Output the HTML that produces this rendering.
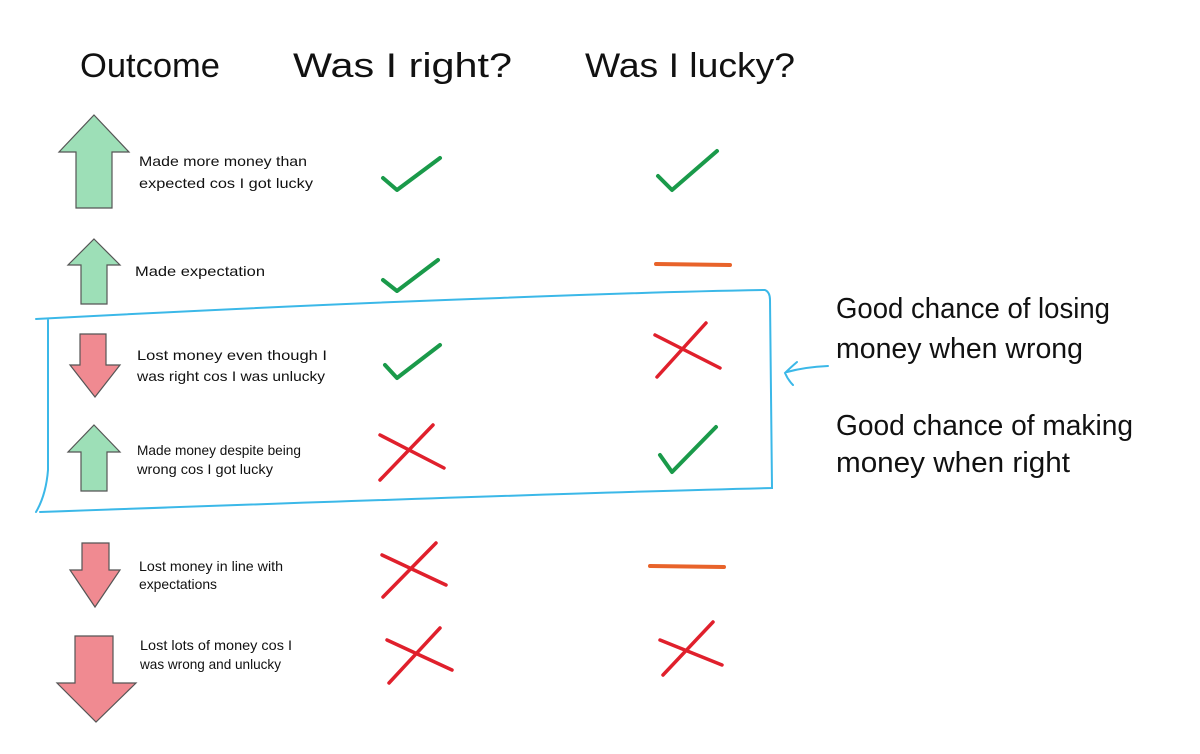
<!DOCTYPE html>
<html><head><meta charset="utf-8"><style>
body{margin:0;background:#fff;width:1200px;height:754px;overflow:hidden}
svg{display:block}
text{font-family:"Liberation Sans Narrow","Liberation Sans",sans-serif;fill:#111}
.s{font-size:14px}
.h{font-size:34px}
.r{font-size:29px}
</style></head><body>
<svg width="1200" height="754" viewBox="0 0 1200 754">
<text class="h" x="80" y="77" textLength="140" lengthAdjust="spacingAndGlyphs">Outcome</text>
<text class="h" x="293" y="77" textLength="219" lengthAdjust="spacingAndGlyphs">Was I right?</text>
<text class="h" x="585" y="77" textLength="210" lengthAdjust="spacingAndGlyphs">Was I lucky?</text>

<g stroke="#555" stroke-width="1.2">
<polygon fill="#9ddfb7" points="94,115 129,152 112,152 112,208 76,208 76,152 59,152"/>
<polygon fill="#9ddfb7" points="94,239 120,265 107,265 107,304 81,304 81,265 68,265"/>
<polygon fill="#f08a91" points="80,334 106,334 106,365 120,365 95,397 70,365 80,365"/>
<polygon fill="#9ddfb7" points="94,425 120,452 107,452 107,491 81,491 81,452 68,452"/>
<polygon fill="#f08a91" points="82,543 109,543 109,570 120,570 95,607 70,570 82,570"/>
<polygon fill="#f08a91" points="75,636 113,636 113,683 136,683 96,722 57,683 75,683"/>
</g>

<g lengthAdjust="spacingAndGlyphs">
<text class="s" x="139" y="166" textLength="168" lengthAdjust="spacingAndGlyphs">Made more money than</text>
<text class="s" x="139" y="188" textLength="174" lengthAdjust="spacingAndGlyphs">expected cos I got lucky</text>
<text class="s" x="135" y="276" textLength="130" lengthAdjust="spacingAndGlyphs">Made expectation</text>
<text class="s" x="137" y="360" textLength="190" lengthAdjust="spacingAndGlyphs">Lost money even though I</text>
<text class="s" x="137" y="381" textLength="188" lengthAdjust="spacingAndGlyphs">was right cos I was unlucky</text>
<text class="s" x="137" y="455" textLength="164" lengthAdjust="spacingAndGlyphs">Made money despite being</text>
<text class="s" x="137" y="474" textLength="136" lengthAdjust="spacingAndGlyphs">wrong cos I got lucky</text>
<text class="s" x="139" y="571" textLength="144" lengthAdjust="spacingAndGlyphs">Lost money in line with</text>
<text class="s" x="139" y="589" textLength="78" lengthAdjust="spacingAndGlyphs">expectations</text>
<text class="s" x="140" y="650" textLength="152" lengthAdjust="spacingAndGlyphs">Lost lots of money cos I</text>
<text class="s" x="140" y="669" textLength="141" lengthAdjust="spacingAndGlyphs">was wrong and unlucky</text>
</g>

<g fill="none" stroke="#1a9a4a" stroke-width="4" stroke-linecap="round" stroke-linejoin="round">
<path d="M383,178 L397,190 L440,158"/>
<path d="M658,176 L672,190 L717,151"/>
<path d="M383,280 L397,291 L438,260"/>
<path d="M385,365 L397,378 L440,345"/>
<path d="M660,455 L672,472 L716,427"/>
</g>
<g fill="none" stroke="#e0202c" stroke-width="3.5" stroke-linecap="round">
<path d="M655,335 L720,368 M706,323 L657,377"/>
<path d="M380,435 L444,468 M433,425 L380,480"/>
<path d="M382,555 L446,585 M436,543 L383,597"/>
<path d="M387,640 L452,670 M440,628 L389,683"/>
<path d="M660,640 L722,665 M713,622 L663,675"/>
</g>
<g stroke="#e8632a" stroke-width="4" stroke-linecap="round">
<path d="M656,264 L730,265"/>
<path d="M650,566 L724,567"/>
</g>

<g fill="none" stroke="#3bb8e8" stroke-width="2" stroke-linecap="round">
<path d="M36,319 Q300,305 500,298 Q650,292 765,290 Q770,292 770,300 L772,488 Q600,492 40,512"/>
<path d="M48,320 L48,470 Q46,495 36,512"/>
<path d="M828,366 Q805,367 787,372 M797,362 Q790,368 785,373 Q788,380 793,385"/>
</g>

<text class="r" x="836" y="318" textLength="274" lengthAdjust="spacingAndGlyphs">Good chance of losing</text>
<text class="r" x="836" y="358" textLength="247" lengthAdjust="spacingAndGlyphs">money when wrong</text>
<text class="r" x="836" y="435" textLength="297" lengthAdjust="spacingAndGlyphs">Good chance of making</text>
<text class="r" x="836" y="472" textLength="234" lengthAdjust="spacingAndGlyphs">money when right</text>
</svg>
</body></html>
